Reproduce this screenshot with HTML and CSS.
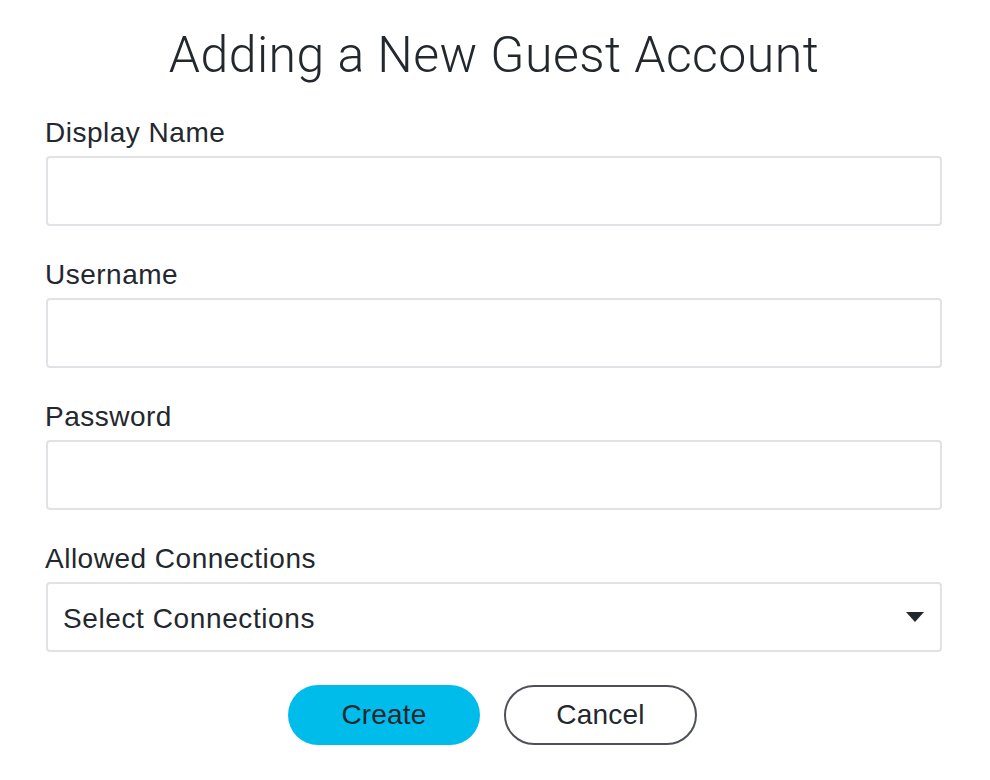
FILE: index.html
```html
<!DOCTYPE html>
<html>
<head>
<meta charset="utf-8">
<link rel="stylesheet" href="styles.css">
</head>
<body>
<div class="dialog">
  <h1 class="title">Adding a New Guest Account</h1>
  <div class="field">
    <label class="label">Display Name</label>
    <div class="input"></div>
  </div>
  <div class="field">
    <label class="label">Username</label>
    <div class="input"></div>
  </div>
  <div class="field">
    <label class="label">Password</label>
    <div class="input"></div>
  </div>
  <div class="field">
    <label class="label">Allowed Connections</label>
    <div class="input select">
      <span class="select-text">Select Connections</span>
      <svg class="caret" width="18" height="10" viewBox="0 0 18 10"><polygon points="0,0 18,0 9,10" fill="#23282e"/></svg>
    </div>
  </div>
  <div class="actions">
    <button class="btn btn-primary">Create</button>
    <button class="btn btn-secondary">Cancel</button>
  </div>
</div>
</body>
</html>
```
FILE: styles.css
```css
html, body {
  margin: 0;
  padding: 0;
  background: #ffffff;
}
body {
  font-family: "Liberation Sans", Arial, sans-serif;
  color: #23282e;
}
.dialog {
  padding: 25px 48px 0 46px;
  display: flex;
  flex-direction: column;
}
.title {
  margin: 0 0 32px 0;
  font-family: Roboto, "Liberation Sans", sans-serif;
  font-weight: 300;
  font-size: 50px;
  line-height: 60px;
  letter-spacing: 0.45px;
  text-align: center;
  color: #23282e;
}
.field {
  display: flex;
  flex-direction: column;
  margin-bottom: 33px;
}
.field:last-of-type {
  margin-bottom: 31px;
}
.label {
  font-size: 28px;
  line-height: 32px;
  letter-spacing: 0.5px;
  margin-bottom: 7px;
  margin-left: -1px;
}
.input {
  box-sizing: border-box;
  height: 70px;
  border: 2px solid #e0e2e5;
  border-radius: 4px;
  background: #fff;
}
.select {
  display: flex;
  align-items: center;
  justify-content: space-between;
  padding: 0 16px 0 15px;
}
.select-text {
  font-size: 28px;
  line-height: 32px;
  letter-spacing: 0.6px;
  margin-top: 4px;
}
.caret {
  display: block;
  margin-top: 0;
}
.actions {
  display: flex;
  justify-content: center;
  gap: 24px;
  padding-right: 3px;
}
.btn {
  box-sizing: border-box;
  width: 192px;
  height: 60px;
  border-radius: 30px;
  font-family: "Liberation Sans", Arial, sans-serif;
  font-size: 28px;
  letter-spacing: 0.2px;
  color: #23282e;
  padding: 0;
  cursor: pointer;
}
.btn-primary {
  background: #00bceb;
  border: none;
}
.btn-secondary {
  background: #fff;
  border: 2px solid #4d5157;
  width: 193px;
}
```
